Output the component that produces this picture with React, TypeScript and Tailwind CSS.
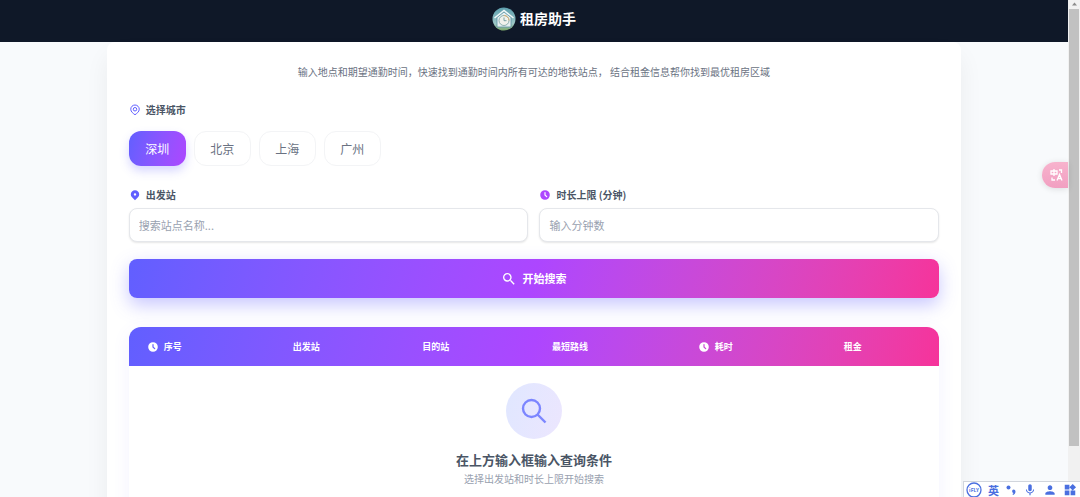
import { useState } from "react"
import { HiClock, HiLocationMarker } from "react-icons/hi"
import { MdMic, MdPerson, MdSearch, MdWidgets } from "react-icons/md"

const CITIES = ["深圳", "北京", "上海", "广州"]

const COLUMNS = [
  { title: "序号", width: "w-[18%]", hasIcon: true },
  { title: "出发站", width: "w-[16%]", hasIcon: false },
  { title: "目的站", width: "w-[16%]", hasIcon: false },
  { title: "最短路线", width: "w-[18%]", hasIcon: false },
  { title: "耗时", width: "w-[18%]", hasIcon: true },
  { title: "租金", width: "w-[14%]", hasIcon: false },
]

function Logo() {
  return (
    <svg viewBox="0 0 24 24" className="size-6" aria-hidden="true">
      <defs>
        <linearGradient id="logo-sky" x1="0" y1="0" x2="0" y2="1">
          <stop offset="0" stopColor="#5d9fae" />
          <stop offset="0.7" stopColor="#9cc6c6" />
          <stop offset="1" stopColor="#7faa6c" />
        </linearGradient>
      </defs>
      <circle cx="12" cy="12" r="11.5" fill="url(#logo-sky)" />
      <path d="M5 10.5 12 5l7 5.5V20H5z" fill="#e6eff0" stroke="#5a93a2" strokeWidth="0.8" />
      <path d="M2.5 11 12 3.5l9.5 7.5" fill="none" stroke="#f3f9fa" strokeWidth="1.5" />
      <circle cx="12" cy="13.5" r="5" fill="#f1f2ec" stroke="#82a9a8" strokeWidth="0.9" />
      <path d="M12 8.5a5 5 0 0 1 5 5" fill="none" stroke="#deb071" strokeWidth="1" />
      <path d="M12 10.5v3.2h2.5" fill="none" stroke="#5e8f94" strokeWidth="0.8" />
    </svg>
  )
}

function CityPinIcon() {
  return (
    <svg viewBox="0 0 24 24" className="size-3 text-[#615fff]" fill="none" stroke="currentColor" strokeWidth="2" aria-hidden="true">
      <path d="M12 21.5c-3.500-2.500-8.500-6-8.500-11a8.500 8.500 0 0 1 17 0c0 5-5 8.500-8.500 11z" />
      <circle cx="12" cy="10.5" r="3.5" />
    </svg>
  )
}

function CitySelector() {
  const [city, setCity] = useState(CITIES[0])

  return (
    <section>
      <h2 className="flex items-center gap-[5px] text-[10px] leading-4 font-bold text-gray-600">
        <CityPinIcon />
        选择城市
      </h2>
      <div className="mt-[13px] flex gap-2">
        {CITIES.map((name) => (
          <button
            key={name}
            type="button"
            aria-pressed={name === city}
            onClick={() => setCity(name)}
            className={
              name === city
                ? "h-[35px] w-[57px] rounded-xl bg-linear-105 from-[#615fff] to-[#ad46ff] text-[12px] text-white shadow-[0_5px_10px_rgba(97,95,255,0.25)]"
                : "h-[35px] w-[57px] rounded-xl border border-gray-100 bg-white text-[12px] text-gray-500"
            }
          >
            {name}
          </button>
        ))}
      </div>
    </section>
  )
}

function SearchForm() {
  const labelClass = "flex items-center gap-[5px] text-[10px] leading-4 font-bold text-gray-600"
  const inputClass =
    "mt-[5px] h-[34px] w-full rounded-lg border border-gray-200 bg-white px-[9px] text-[11px] text-gray-700 shadow-[0_1px_2px_rgba(0,0,0,0.1)] outline-none placeholder:text-gray-400"

  return (
    <form className="mt-[21px]" onSubmit={(e) => e.preventDefault()}>
      <div className="grid grid-cols-2 gap-[11px]">
        <div>
          <label htmlFor="station" className={labelClass}>
            <HiLocationMarker className="size-3 text-[#615fff]" />
            出发站
          </label>
          <input id="station" type="text" placeholder="搜索站点名称..." className={inputClass} />
        </div>
        <div>
          <label htmlFor="minutes" className={labelClass}>
            <HiClock className="size-3 text-[#ad46ff]" />
            时长上限 (分钟)
          </label>
          <input id="minutes" type="text" inputMode="numeric" placeholder="输入分钟数" className={inputClass} />
        </div>
      </div>
      <button
        type="submit"
        className="mt-[17px] flex h-[39px] w-full items-center justify-center gap-[5px] rounded-lg bg-linear-105 from-[#615fff] via-[#ad46ff] to-[#f6339a] text-[11px] font-bold text-white shadow-[0_7px_18px_rgba(97,95,255,0.35)]"
      >
        <MdSearch className="size-4" />
        开始搜索
      </button>
    </form>
  )
}

function ResultTable() {
  return (
    <section className="mt-[29px] overflow-hidden rounded-t-xl shadow-[0_4px_18px_rgba(97,95,255,0.08)]">
      <table className="w-full table-fixed border-collapse">
        <thead>
          <tr className="h-[39px] bg-linear-105 from-[#615fff] via-[#ad46ff] to-[#f6339a] text-white">
            {COLUMNS.map((column) => (
              <th key={column.title} scope="col" className={`${column.width} px-[18px] text-left text-[9px] font-bold`}>
                <span className="flex items-center gap-[5px]">
                  {column.hasIcon && <HiClock className="size-3" />}
                  {column.title}
                </span>
              </th>
            ))}
          </tr>
        </thead>
        <tbody>
          <tr>
            <td colSpan={COLUMNS.length} className="bg-white pt-[17px] pb-12">
              <div className="flex flex-col items-center">
                <div className="flex size-14 items-center justify-center rounded-full bg-linear-105 from-indigo-100 to-[#ece6fe]">
                  <svg viewBox="0 0 28 28" className="size-7 text-[#7c86ff]" fill="none" stroke="currentColor" strokeWidth="2.4" aria-hidden="true">
                    <circle cx="11.5" cy="11.5" r="8.5" />
                    <path d="m17.5 17.5 8 8" />
                  </svg>
                </div>
                <p className="mt-[11px] text-[13px] leading-5 font-bold text-gray-600">在上方输入框输入查询条件</p>
                <p className="mt-px text-[10px] leading-4 text-gray-400">选择出发站和时长上限开始搜索</p>
              </div>
            </td>
          </tr>
        </tbody>
      </table>
    </section>
  )
}

function TranslateButton() {
  return (
    <button
      type="button"
      aria-label="翻译"
      className="absolute top-[162px] right-3 flex h-[26px] w-[26px] items-center justify-center rounded-l-full bg-linear-to-b from-[#f7b3cd] to-[#f19fc1] pl-[3px] shadow-[0_1px_6px_rgba(0,0,0,0.12)]"
    >
      <svg viewBox="0 0 14 14" className="size-[14px]" fill="none" stroke="#fff" strokeWidth="1.3" aria-hidden="true">
        <path d="M1 3h6v3H1zM4 1v7M9 2h2.500v3M2 9.500V12h3M7 12.500 9.500 6.500l2.500 6M8 10.500h3" />
      </svg>
    </button>
  )
}

function InputMethodBar() {
  return (
    <div className="absolute right-0 bottom-0 flex h-4 w-[117px] items-center justify-between border-t border-l border-gray-300 bg-white pr-[3px] pl-[2px] text-[#4a6fe0]">
      <svg viewBox="0 0 16 16" className="size-4" aria-hidden="true">
        <circle cx="8" cy="8" r="7" fill="none" stroke="currentColor" strokeWidth="1.3" />
        <text x="8" y="10" textAnchor="middle" fontSize="5" fontWeight="700" fill="currentColor">
          iFLY
        </text>
      </svg>
      <span className="text-[11px] leading-4 font-bold">英</span>
      <svg viewBox="0 0 12 12" className="size-3" fill="currentColor" aria-hidden="true">
        <circle cx="3.5" cy="3.5" r="2" />
        <path d="M8.500 5.500a2 2 0 0 1 2 2c0 2-1 3-2.500 3.500l-.5-1c.7-.3 1-.6 1-1a1.800 1.800 0 0 1 0-3.500z" />
      </svg>
      <MdMic className="size-[14px]" />
      <MdPerson className="size-[14px]" />
      <MdWidgets className="size-[14px]" />
    </div>
  )
}

function Scrollbar() {
  return (
    <div className="flex w-3 shrink-0 flex-col items-center bg-[#f1f1f1]" aria-hidden="true">
      <svg viewBox="0 0 11 9" className="h-[9px] w-[11px]">
        <path d="M5.500 2.500 8 5.500H3z" fill="#8b8b8b" />
      </svg>
      <div className="h-[88%] w-[10px] bg-[#c1c1c1]" />
    </div>
  )
}

export default function App() {
  return (
    <div className="relative flex h-screen overflow-hidden bg-slate-50 font-['Noto_Sans_CJK_SC',sans-serif]">
      <div className="min-w-0 flex-1">
        <header className="flex h-[42px] items-center justify-center gap-1 bg-[#0f1828] pb-[5px] text-white">
          <Logo />
          <h1 className="text-[14px] font-bold">租房助手</h1>
        </header>
        <main className="mx-auto min-h-screen w-4/5 rounded-t-lg bg-white px-[22px] pt-[22px] shadow-[0_14px_24px_rgba(0,0,0,0.06)]">
          <p className="text-center text-[10px] leading-4 text-gray-500">
            输入地点和期望通勤时间，快速找到通勤时间内所有可达的地铁站点， 结合租金信息帮你找到最优租房区域
          </p>
          <div className="mt-[22px]">
            <CitySelector />
            <SearchForm />
            <ResultTable />
          </div>
        </main>
      </div>
      <Scrollbar />
      <TranslateButton />
      <InputMethodBar />
    </div>
  )
}
